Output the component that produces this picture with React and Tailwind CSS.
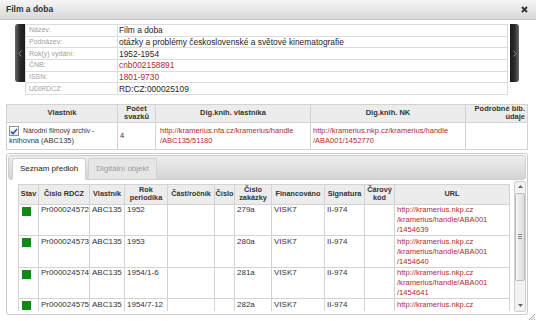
import React from 'react';

const info = [
  ['Název:', 'Film a doba', false],
  ['Podnázev:', 'otázky a problémy československé a světové kinematografie', false],
  ['Rok(y) vydání:', '1952-1954', false],
  ['ČNB:', 'cnb002158891', true],
  ['ISSN:', '1801-9730', true],
  ['UDIRDCZ:', 'RD:CZ:000025109', false],
];

const rows = [
  { id: 'Pr000024572', year: '1952', zak: '279a', handle: '/1454639' },
  { id: 'Pr000024573', year: '1953', zak: '280a', handle: '/1454640' },
  { id: 'Pr000024574', year: '1954/1-6', zak: '281a', handle: '/1454641' },
  { id: 'Pr000024575', year: '1954/7-12', zak: '282a', handle: '/1454642' },
];

const Chevron = ({ dir }) => (
  <svg width="4" height="7" viewBox="0 0 4 7">
    <path d={dir === 'left' ? 'M3.5 0.5L0.8 3.5L3.5 6.5' : 'M0.5 0.5L3.2 3.5L0.5 6.5'} fill="none" stroke="#9a9a9a" strokeWidth="0.8" />
  </svg>
);

export default function App() {
  const th = 'border border-[#d3d3d3] p-0 font-bold text-[#333] text-center align-middle leading-[8.5px]';
  const td = 'border border-[#d3d3d3] p-0 align-top';
  const cell = `${td} pl-[2px] leading-[10px] pt-[0.5px]`;

  return (
    <div className="w-[536px] h-[321px] bg-white relative overflow-hidden text-[#222] font-['Liberation_Sans',Arial,sans-serif]">
      {/* title bar */}
      <div className="h-[20px] flex items-center justify-between pl-[6px] pr-[8px] bg-linear-to-b from-[#f6f6f6] to-[#d8d8d8] border-b border-[#c4c4c4]">
        <span className="text-[8.5px] font-bold text-[#333]">Film a doba</span>
        <svg width="7" height="7" viewBox="0 0 7 7">
          <path d="M1 1L6 6M6 1L1 6" stroke="#333" strokeWidth="1.9" />
        </svg>
      </div>

      {/* bib record carousel */}
      <div className="flex items-start mt-[4px] pl-[15px]">
        <div className="w-[10px] h-[58px] rounded-l-[3px] bg-linear-to-r from-[#6a6a6a] via-[#2a2a2a] to-[#1c1c1c] flex items-center justify-center">
          <Chevron dir="left" />
        </div>
        <table className="w-[483px] table-fixed border-collapse border border-[#dcdcdc]">
          <colgroup>
            <col className="w-[92px]" />
            <col />
          </colgroup>
          <tbody>
            {info.map(([label, value, link]) => (
              <tr key={label}>
                <td className="h-[11.67px] p-0 pl-[3px] border border-[#dcdcdc] text-[7px] text-[#a0a0a0] leading-[10px]">{label}</td>
                <td className={`h-[11.67px] p-0 pl-[1px] border border-[#dcdcdc] text-[8.4px] leading-[10px] ${link ? 'text-[#b4282e]' : 'text-[#1e1e1e]'}`}>{value}</td>
              </tr>
            ))}
          </tbody>
        </table>
        <div className="ml-[2px] w-[9px] h-[58px] rounded-r-[3px] bg-linear-to-r from-[#1c1c1c] via-[#2a2a2a] to-[#6a6a6a] flex items-center justify-center">
          <Chevron dir="right" />
        </div>
      </div>

      {/* owners */}
      <table className="mt-[9px] ml-[6px] w-[521px] table-fixed border-collapse text-[7.5px]">
        <colgroup>
          <col className="w-[111px]" />
          <col className="w-[38px]" />
          <col className="w-[155px]" />
          <col className="w-[155px]" />
          <col className="w-[62px]" />
        </colgroup>
        <thead>
          <tr className="bg-[#ececec]">
            <th className={`${th} h-[17px]`}>Vlastník</th>
            <th className={th}>Počet<br />svazků</th>
            <th className={th}>Dig.knih. vlastníka</th>
            <th className={th}>Dig.knih. NK</th>
            <th className={`${th} text-right pr-[2px]`}>Podrobné bib.<br />údaje</th>
          </tr>
        </thead>
        <tbody>
          <tr>
            <td className="h-[27px] p-0 pl-[2px] border border-[#d3d3d3] align-middle leading-[10px] text-[#333]">
              <span className="inline-flex w-[10px] h-[10px] mr-[4px] align-[-2px] border border-[#8f8f8f] bg-linear-to-b from-white to-[#e6e6e6] items-center justify-center">
                <svg width="8" height="7" viewBox="0 0 8 7">
                  <path d="M1 3.5L3 5.6L7 1" fill="none" stroke="#1f4f9e" strokeWidth="1.4" />
                </svg>
              </span>
              <span className="text-[6.8px]">Národní filmový archiv -</span>
              <br />knihovna (ABC135)
            </td>
            <td className="p-0 pl-[2px] border border-[#d3d3d3] align-middle text-[#333]">4</td>
            <td className="p-0 pl-[4px] border border-[#d3d3d3] align-middle leading-[10px] text-[#b4282e]">
              http://kramerius.nfa.cz/kramerius/handle<br />/ABC135/51180
            </td>
            <td className="p-0 pl-[2px] border border-[#d3d3d3] align-middle leading-[10px] text-[#b4282e]">
              http://kramerius.nkp.cz/kramerius/handle<br />/ABA001/1452770
            </td>
            <td className="p-0 border border-[#d3d3d3]"></td>
          </tr>
        </tbody>
      </table>

      {/* tabs panel */}
      <div className="mt-[3px] ml-[6px] w-[522px] h-[162px] border border-[#cacaca] rounded-[3px] overflow-hidden flex flex-col pt-[1px] px-[1px]">
        <div className="h-[25px] shrink-0 rounded-[3px] bg-linear-to-b from-[#ededed] to-[#d4d4d4] border border-[#cfcfcf] flex items-end pl-[3px] gap-[2px]">
          <div className="h-[22px] -mb-px px-[7px] bg-white border border-[#cfcfcf] border-b-white rounded-t-[3px] text-[8px] text-[#222] flex items-center">
            Seznam předloh
          </div>
          <div className="h-[21px] px-[7px] bg-[#e6e6e6] border border-[#d3d3d3] border-b-0 rounded-t-[3px] text-[8px] text-[#9a9a9a] flex items-center">
            Digitální objekt
          </div>
        </div>
        <div className="flex flex-1 min-h-0">
          <div className="w-[506px] h-[131px] overflow-hidden pl-[10px] pt-[4px]">
            <table className="w-[491px] table-fixed border-collapse text-[8px]">
              <colgroup>
                <col className="w-[20px]" />
                <col className="w-[51px]" />
                <col className="w-[35px]" />
                <col className="w-[43px]" />
                <col className="w-[47px]" />
                <col className="w-[20px]" />
                <col className="w-[37px]" />
                <col className="w-[53px]" />
                <col className="w-[40px]" />
                <col className="w-[30px]" />
                <col className="w-[115px]" />
              </colgroup>
              <thead>
                <tr className="bg-[#ececec] text-[7.3px]">
                  <th className={`${th} h-[20px]`}>Stav</th>
                  <th className={th}>Číslo RDCZ</th>
                  <th className={th}>Vlastník</th>
                  <th className={th}>Rok<br />periodika</th>
                  <th className={th}>Část/ročník</th>
                  <th className={th}>Číslo</th>
                  <th className={th}>Číslo<br />zakázky</th>
                  <th className={th}>Financováno</th>
                  <th className={th}>Signatura</th>
                  <th className={th}>Čárový<br />kód</th>
                  <th className={th}>URL</th>
                </tr>
              </thead>
              <tbody className="text-[#333]">
                {rows.map((r) => (
                  <tr key={r.id}>
                    <td className={`${td} h-[31.5px] pl-[3px] pt-[2px]`}>
                      <div className="w-[9px] h-[9px] bg-[#128a12]" />
                    </td>
                    <td className={`${cell} pl-[1px]`}>{r.id}</td>
                    <td className={`${cell} pl-[1px]`}>ABC135</td>
                    <td className={cell}>{r.year}</td>
                    <td className={td}></td>
                    <td className={td}></td>
                    <td className={cell}>{r.zak}</td>
                    <td className={cell}>VISK7</td>
                    <td className={cell}>II-974</td>
                    <td className={td}></td>
                    <td className={`${cell} text-[7.6px] text-[#b4282e]`}>
                      http://kramerius.nkp.cz<br />/kramerius/handle/ABA001<br />{r.handle}
                    </td>
                  </tr>
                ))}
              </tbody>
            </table>
          </div>
          <div className="mt-[1px] w-[12px] h-[131px] border border-[#cfcfcf] rounded-[2px] bg-[#f2f2f2] flex flex-col items-center">
            <div className="h-[10px] flex items-center justify-center">
              <svg width="5" height="3" viewBox="0 0 5 3"><path d="M0 3L2.5 0L5 3Z" fill="#666" /></svg>
            </div>
            <div className="mt-[1px] w-[10px] h-[88px] rounded-[2px] border border-[#bdbdbd] bg-linear-to-r from-[#f4f4f4] to-[#dcdcdc] flex flex-col items-center justify-center gap-[1px]">
              <div className="w-[4px] h-px bg-[#8a8a8a]" />
              <div className="w-[4px] h-px bg-[#8a8a8a]" />
              <div className="w-[4px] h-px bg-[#8a8a8a]" />
            </div>
            <div className="mt-auto h-[10px] flex items-center justify-center">
              <svg width="5" height="3" viewBox="0 0 5 3"><path d="M0 0L2.5 3L5 0Z" fill="#666" /></svg>
            </div>
          </div>
        </div>
      </div>

      {/* resize grip */}
      <svg className="absolute right-[1px] bottom-[1px]" width="6" height="6" viewBox="0 0 6 6">
        <path d="M6 0L0 6M6 2.5L2.5 6M6 5L5 6" stroke="#8a8a8a" strokeWidth="0.8" />
      </svg>
    </div>
  );
}
